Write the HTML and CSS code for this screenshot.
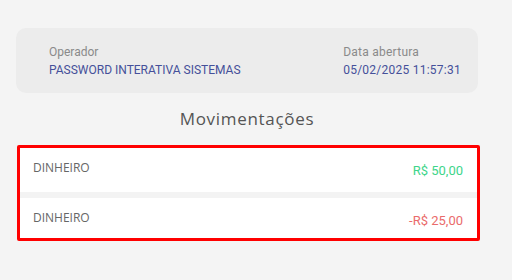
FILE: index.html
```html
<!DOCTYPE html>
<html lang="pt-BR">
<head>
<meta charset="utf-8">
<link rel="stylesheet" href="styles.css">
</head>
<body>
<main class="page">
  <section class="info-card">
    <div class="info-col">
      <span class="info-label">Operador</span>
      <span class="info-value">PASSWORD INTERATIVA SISTEMAS</span>
    </div>
    <div class="info-col info-col-date">
      <span class="info-label">Data abertura</span>
      <span class="info-value">05/02/2025 11:57:31</span>
    </div>
  </section>
  <h2 class="section-title">Movimentações</h2>
  <ul class="moves">
    <li class="move"><span class="move-name">DINHEIRO</span><span class="move-amount positive">R$ 50,00</span></li>
    <li class="move"><span class="move-name">DINHEIRO</span><span class="move-amount negative">-R$ 25,00</span></li>
  </ul>
</main>
</body>
</html>
```
FILE: styles.css
```css
html, body {
  margin: 0;
  padding: 0;
  background: #f4f4f4;
}
body {
  font-family: Roboto, "Liberation Sans", sans-serif;
  width: 512px;
  height: 280px;
  overflow: hidden;
}
.page {
  padding: 28px 34px 0 16px;
  display: flex;
  flex-direction: column;
}
.info-card {
  width: 462px;
  box-sizing: border-box;
  background: #ececec;
  border-radius: 10px;
  padding: 15px 17px 14px 33px;
  display: flex;
  justify-content: space-between;
}
.info-col {
  display: flex;
  flex-direction: column;
}
.info-col-date {
  letter-spacing: 0.25px;
}
.info-label {
  font-size: 12px;
  line-height: 18px;
  color: #8a8a8a;
}
.info-value {
  font-size: 12px;
  line-height: 18px;
  color: #45509a;
}
.section-title {
  margin: 14px 0 14px 0;
  width: 462px;
  text-align: center;
  font-family: "Open Sans", sans-serif;
  font-weight: 400;
  font-size: 17px;
  line-height: 24px;
  color: #555;
  letter-spacing: 0.7px;
}
.moves {
  list-style: none;
  margin: 0 0 0 1px;
  padding: 0;
  width: 463px;
  box-sizing: border-box;
  border: 3px solid #ff0000;
  border-radius: 2px;
  background: #f3f3f3;
  display: flex;
  flex-direction: column;
  gap: 6px;
}
.move {
  height: 40px;
  box-sizing: border-box;
  background: #ffffff;
  display: flex;
  align-items: flex-start;
  justify-content: space-between;
  padding: 12px 14px 0 13px;
}
.move:first-child {
  height: 44px;
}
.move-name {
  font-family: "Open Sans", sans-serif;
  font-size: 12px;
  line-height: 16px;
  color: #666;
}
.move-amount {
  font-size: 13px;
  line-height: 16px;
  margin-top: 3px;
}
.positive { color: #3ed58a; }
.negative { color: #ea6b6b; }
```
